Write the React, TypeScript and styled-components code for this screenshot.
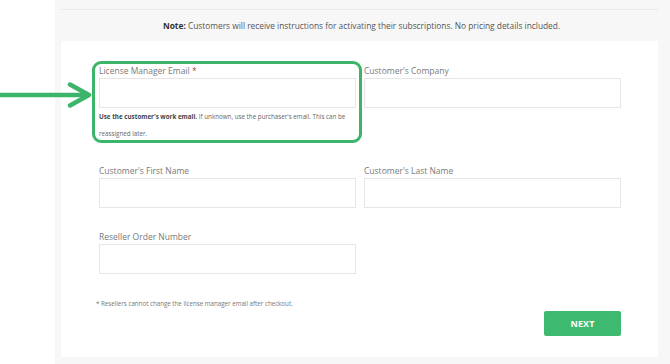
import React from "react";
import styled, { createGlobalStyle } from "styled-components";

const Global = createGlobalStyle`
  html, body { margin: 0; padding: 0; background: #ffffff; }
  body { font-family: "Open Sans", "Liberation Sans", sans-serif; }
  * { box-sizing: border-box; }
`;

const Page = styled.div`
  position: relative;
  display: flex;
  width: 670px;
  height: 364px;
  background: #ffffff;
  overflow: hidden;
`;

const Gutter = styled.div`
  width: 55px;
  flex: none;
`;

const Panel = styled.div`
  flex: 1;
  display: flex;
  flex-direction: column;
  background: #f7f7f7;
  padding: 9px 12px 7px 6px;
`;

const NoteBar = styled.div`
  height: 32px;
  border-top: 1px solid #e9e9e9;
  display: flex;
  align-items: center;
  justify-content: center;
  padding-left: 4px;
  font-size: 8.35px;
  color: #555;
`;

const Strong = styled.b`
  color: #333;
  font-weight: 700;
`;

const Card = styled.div`
  flex: 1;
  background: #ffffff;
  padding: 23px 37px 0 38px;
  display: flex;
  flex-direction: column;
`;

const Grid = styled.div`
  display: grid;
  grid-template-columns: 257px 257px;
  column-gap: 8px;
  row-gap: 22px;
  align-items: start;
`;

const Field = styled.div`
  position: relative;
  display: flex;
  flex-direction: column;
`;

const Label = styled.label`
  font-size: 8.5px;
  line-height: 14px;
  color: #7a7a7a;
`;

const Required = styled.span`
  color: #b5473a;
`;

const Input = styled.input`
  height: 30px;
  border: 1px solid #e6e6e6;
  background: #fff;
  outline: none;
  font: inherit;
`;

const Help = styled.p`
  margin: 0;
  font-size: 6.25px;
  line-height: 17px;
  color: #666;
`;

const HelpStrong = styled.b`
  color: #444;
  font-weight: 700;
`;

const Highlight = styled.div`
  position: absolute;
  left: -7px;
  top: -3px;
  width: 270px;
  height: 82px;
  border: 3px solid #3cb46a;
  border-radius: 9px;
  pointer-events: none;
`;

const Arrow = styled.svg`
  position: absolute;
  left: 0;
  top: 82px;
`;

const Footnote = styled.div`
  margin-top: 25px;
  margin-left: -3px;
  font-size: 6.2px;
  line-height: 10px;
  color: #777;
`;

const Actions = styled.div`
  display: flex;
  justify-content: flex-end;
  margin-top: 2px;
`;

const NextButton = styled.button`
  width: 77px;
  height: 25px;
  border: none;
  border-radius: 2px;
  background: #3dba6f;
  color: #fff;
  font-family: "Open Sans", "Liberation Sans", sans-serif;
  font-weight: 700;
  font-size: 9px;
  letter-spacing: 0.1px;
`;

export default function App() {
  return (
    <>
      <Global />
      <Page>
        <Gutter />
        <Panel>
          <NoteBar>
            <span>
              <Strong>Note:</Strong> Customers will receive instructions for activating their subscriptions. No pricing details included.
            </span>
          </NoteBar>
          <Card>
            <Grid>
              <Field>
                <Highlight />
                <Label>
                  License Manager Email <Required>*</Required>
                </Label>
                <Input type="email" />
                <Help>
                  <HelpStrong>Use the customer's work email.</HelpStrong> If unknown, use the purchaser's email. This can be reassigned later.
                </Help>
              </Field>
              <Field>
                <Label>Customer's Company</Label>
                <Input />
              </Field>
              <Field>
                <Label>Customer's First Name</Label>
                <Input />
              </Field>
              <Field>
                <Label>Customer's Last Name</Label>
                <Input />
              </Field>
              <Field>
                <Label>Reseller Order Number</Label>
                <Input />
              </Field>
            </Grid>
            <Footnote>* Resellers cannot change the license manager email after checkout.</Footnote>
            <Actions>
              <NextButton>NEXT</NextButton>
            </Actions>
          </Card>
        </Panel>
        <Arrow width="94" height="28" viewBox="0 0 94 28">
          <line x1="0" y1="13" x2="87" y2="13" stroke="#3cb46a" strokeWidth="4.5" />
          <polyline points="70,2.5 89,13 70,23.5" fill="none" stroke="#3cb46a" strokeWidth="4.5" strokeLinecap="round" strokeLinejoin="round" />
        </Arrow>
      </Page>
    </>
  );
}
